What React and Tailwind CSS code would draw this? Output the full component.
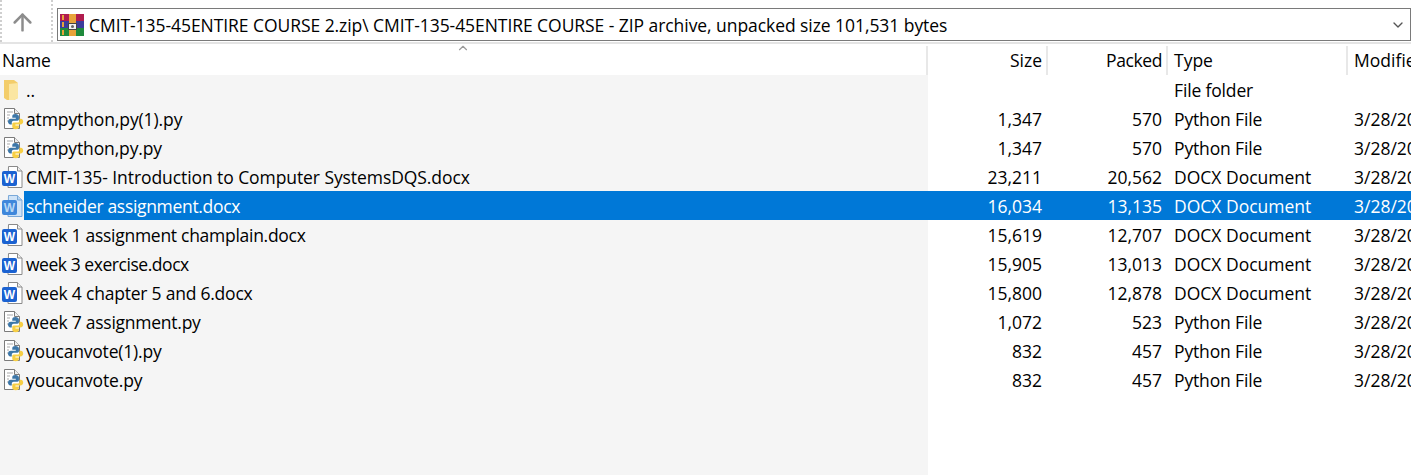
import React from 'react';
import { ArrowUp, ChevronDown, ChevronUp } from 'lucide-react';

const files = [
    { name: '..', kind: 'folder', type: 'File folder', fit: '' },
    { name: 'atmpython,py(1).py', kind: 'py', size: '1,347', packed: '570', type: 'Python File', fit: 'tracking-[-0.11px]' },
    { name: 'atmpython,py.py', kind: 'py', size: '1,347', packed: '570', type: 'Python File', fit: 'tracking-[-0.13px]' },
    { name: 'CMIT-135- Introduction to Computer SystemsDQS.docx', kind: 'doc', size: '23,211', packed: '20,562', type: 'DOCX Document', fit: 'tracking-[-0.08px]' },
    { name: 'schneider assignment.docx', kind: 'doc', size: '16,034', packed: '13,135', type: 'DOCX Document', selected: true, fit: 'tracking-[-0.32px]' },
    { name: 'week 1 assignment champlain.docx', kind: 'doc', size: '15,619', packed: '12,707', type: 'DOCX Document', fit: 'tracking-[-0.28px]' },
    { name: 'week 3 exercise.docx', kind: 'doc', size: '15,905', packed: '13,013', type: 'DOCX Document', fit: 'tracking-[-0.45px]' },
    { name: 'week 4 chapter 5 and 6.docx', kind: 'doc', size: '15,800', packed: '12,878', type: 'DOCX Document', fit: 'tracking-[-0.22px]' },
    { name: 'week 7 assignment.py', kind: 'py', size: '1,072', packed: '523', type: 'Python File', fit: 'tracking-[-0.25px]' },
    { name: 'youcanvote(1).py', kind: 'py', size: '832', packed: '457', type: 'Python File', fit: 'tracking-[-0.19px]' },
    { name: 'youcanvote.py', kind: 'py', size: '832', packed: '457', type: 'Python File', fit: 'tracking-[-0.15px]' },
];

const RarIcon = () => (
    <svg width="24" height="22" viewBox="0 0 24 22" className="shrink-0">
        <rect x="0" y="0" width="24" height="7" fill="#b01c4e" />
        <rect x="0" y="7" width="24" height="7" fill="#3c3c9c" />
        <rect x="0" y="14" width="24" height="8" fill="#1f8a3c" />
        <rect x="2" y="1" width="2" height="5" fill="#e8a33a" />
        <rect x="2" y="8" width="2" height="5" fill="#e8a33a" />
        <rect x="2" y="16" width="2" height="5" fill="#e8a33a" />
        <rect x="9" y="0" width="7" height="9" fill="#e8a33a" />
        <rect x="9" y="16" width="7" height="6" fill="#e8a33a" />
        <rect x="8.500" y="9.500" width="8" height="6" fill="#f2f2f2" stroke="#444" strokeWidth="1" />
        <circle cx="12.500" cy="12.500" r="1.500" fill="#666" />
    </svg>
);

const FolderIcon = () => (
    <svg width="18" height="22" viewBox="0 0 18 22">
        <path d="M2 1h10l4 3v15l-4 2H5l-3-2z" fill="#f3cd6a" />
        <path d="M7 5l9-1v15l-4 2H7z" fill="#fbe6a2" />
    </svg>
);

const PyIcon = () => (
    <svg width="22" height="24" viewBox="0 0 22 24">
        <path d="M2.500 1.500h10l5 5v15h-15z" fill="#fff" stroke="#7b7b7b" />
        <path d="M12.500 1.500v5h5" fill="#eee" stroke="#7b7b7b" />
        <path d="M5 5h6M5 8h3M5 11h2M5 14h1" stroke="#a9a9a9" />
        <g transform="translate(6 7) scale(0.95)">
            <path d="M8 0C5 0 4.500 1 4.500 2.500V4H8.200V5H3C1 5 0 6.200 0 8C0 9.800 1 11 2.500 11H4V9C4 7.800 5 7 6 7H10C11 7 11.500 6.200 11.500 5.500V2.500C11.500 1 10 0 8 0Z" fill="#3d77a8" />
            <path d="M8 0C5 0 4.500 1 4.500 2.500V4H8.200V5H3C1 5 0 6.200 0 8C0 9.800 1 11 2.500 11H4V9C4 7.800 5 7 6 7H10C11 7 11.500 6.200 11.500 5.500V2.500C11.500 1 10 0 8 0Z" fill="#f7cf45" transform="rotate(180 8 8)" />
        </g>
    </svg>
);

const DocIcon = ({ selected }) => (
    <svg width="22" height="24" viewBox="0 0 22 24">
        <path d="M6.500 1.500h9l4.500 4.500v16.500h-14z" fill={selected ? '#cfe3f7' : '#fff'} stroke={selected ? '#7aa8d8' : '#8a8a8a'} />
        <path d="M15.500 1.500v4.500h4.500" fill={selected ? '#b9d6f2' : '#eee'} stroke={selected ? '#7aa8d8' : '#8a8a8a'} />
        <rect x="0" y="6" width="15" height="15" rx="2" fill={selected ? '#3f87db' : '#1b62d1'} />
        <text x="7.500" y="18" textAnchor="middle" fontSize="12" fontWeight="700" fontFamily="Liberation Sans, sans-serif" fill={selected ? '#b8d8f5' : '#fff'}>W</text>
    </svg>
);

const FileIcon = ({ kind, selected }) => {
    if (kind === 'folder') return <FolderIcon />;
    if (kind === 'py') return <PyIcon />;
    return <DocIcon selected={selected} />;
};

const Grip = () => (
    <div className="w-0 h-full border-l-2 border-dotted border-[#cfcfcf]" />
);

const App = () => {
    return (
        <div className="w-[1411px] h-[475px] overflow-hidden bg-white flex flex-col text-[17.5px] text-black font-['Open_Sans','Noto_Sans',sans-serif]">
            <div className="h-[44px] flex items-center border-b-2 border-[#e4e4e4] shrink-0">
                <Grip />
                <div className="w-[49px] pr-[9px] mt-[3px] flex justify-center text-[#8c8c8c]">
                    <ArrowUp size={27} strokeWidth={2.2} />
                </div>
                <Grip />
                <div className="flex-1 ml-[4px] mt-[7px] h-[33px] border border-[#7a7a7a] flex items-center pl-[2px] pr-[4px] gap-[5px]">
                    <RarIcon />
                    <span className="flex-1 whitespace-nowrap pt-[2px] tracking-[-0.06px]">CMIT-135-45ENTIRE COURSE 2.zip\ CMIT-135-45ENTIRE COURSE - ZIP archive, unpacked size 101,531 bytes</span>
                    <ChevronDown size={16} className="text-[#555]" />
                </div>
            </div>

            <div className="relative h-[31px] grid grid-cols-[928px_120px_120px_180px_1fr] shrink-0 pt-[2px]">
                <ChevronUp size={14} className="absolute left-[456px] -top-[3px] text-[#9a9a9a]" />
                <div className="pl-[2px] flex items-center border-r-2 border-[#e8e8e8]">Name</div>
                <div className="pr-[4px] flex items-center justify-end border-r-2 border-[#e8e8e8]">Size</div>
                <div className="pr-[4px] flex items-center justify-end border-r-2 border-[#e8e8e8] tracking-[-0.4px]">Packed</div>
                <div className="pl-[6px] flex items-center border-r-2 border-[#e8e8e8]">Type</div>
                <div className="pl-[6px] flex items-center whitespace-nowrap overflow-hidden">Modified</div>
            </div>

            {files.map((f) => (
                <div
                    key={f.name}
                    className="h-[29px] grid grid-cols-[928px_120px_120px_180px_1fr] shrink-0"
                >
                    <div className="bg-[#f5f5f5] flex items-center">
                        <div className="w-[24px] pl-[2px] flex items-center shrink-0">
                            <FileIcon kind={f.kind} selected={f.selected} />
                        </div>
                        <div className={`flex-1 h-full flex items-center pl-[2px] pt-[2px] whitespace-nowrap ${f.fit} ${f.selected ? 'bg-[#0078d7] text-white' : ''}`}>
                            {f.name}
                        </div>
                    </div>
                    <div className={`pr-[6px] pt-[2px] flex items-center justify-end ${f.selected ? 'bg-[#0078d7] text-white' : ''}`}>{f.size}</div>
                    <div className={`pr-[6px] pt-[2px] flex items-center justify-end ${f.selected ? 'bg-[#0078d7] text-white' : ''}`}>{f.packed}</div>
                    <div className={`pl-[6px] pt-[2px] flex items-center ${f.kind === 'doc' ? '' : 'tracking-[-0.15px]'} ${f.selected ? 'bg-[#0078d7] text-white' : ''}`}>{f.type}</div>
                    <div className={`pl-[6px] pt-[2px] flex items-center overflow-hidden whitespace-nowrap ${f.selected ? 'bg-[#0078d7] text-white' : ''}`}>
                        {f.kind !== 'folder' && '3/28/2021'}
                    </div>
                </div>
            ))}

            <div className="flex-1 w-[928px] bg-[#f5f5f5]" />
        </div>
    );
};

export default App;
